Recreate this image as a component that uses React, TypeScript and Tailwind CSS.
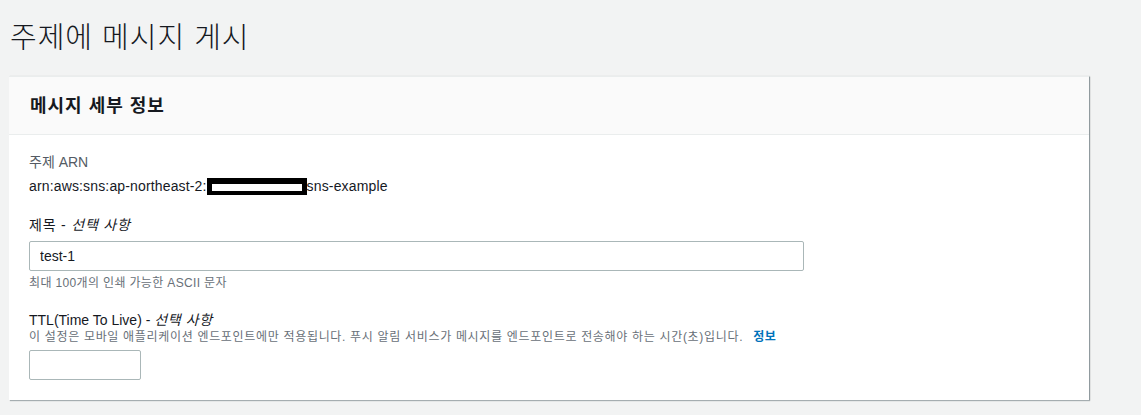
export default function App() {
  const font = { fontFamily: '"Liberation Sans", "Noto Sans CJK KR", sans-serif' }

  return (
    <div className="min-h-[415px] bg-[#f2f3f3] pt-[20px] pb-[14px] pr-[52px] pl-[9px] text-[#16191f]" style={font}>
      <h1 className="pl-px text-[29px] font-light leading-[36px] tracking-[1px] text-[#16191f]">주제에 메시지 게시</h1>

      <div className="mt-[20px] border-t border-[#eaeded] bg-white shadow-[1px_1px_1px_0_rgba(0,28,36,0.3),1px_0_1px_0_rgba(0,28,36,0.15)]">
        {/* header */}
        <div className="flex h-[58px] items-center border-b border-[#eaeded] bg-[#fafafa] px-[21px]">
          <h2 className="text-[18px] font-bold leading-[22px] tracking-[1px]">메시지 세부 정보</h2>
        </div>

        <div className="px-[20px] pt-[17px] pb-[20px]">
          {/* ARN */}
          <div>
            <p className="text-[14px] leading-[20px] text-[#545b64]">주제 ARN</p>
            <p className="mt-[4px] flex items-center text-[14px] leading-[20px] tracking-[0.15px]">
              arn:aws:sns:ap-northeast-2:
              <span className="inline-block h-[17px] w-[100px] border-x-[5px] border-t-[6px] border-b-[4px] border-black bg-white" />
              sns-example
            </p>
          </div>

          {/* subject */}
          <div className="mt-[19px]">
            <label className="block text-[14px] leading-[20px] tracking-[0.8px]">
              제목 - <i>선택 사항</i>
            </label>
            <input
              defaultValue="test-1"
              className="mt-[6px] block h-[30px] w-[775px] rounded-[2px] border border-[#aab7b8] px-[10px] text-[14px] text-[#16191f] outline-none"
            />
            <p className="mt-[4px] text-[12px] leading-[16px] tracking-[0.35px] text-[#687078]">최대 100개의 인쇄 가능한 ASCII 문자</p>
          </div>

          {/* TTL */}
          <div className="mt-[20px]">
            <label className="block text-[14px] leading-[18px]">
              TTL(Time To Live) - <i className="tracking-[0.6px]">선택 사항</i>
            </label>
            <p className="text-[12px] leading-[16px] tracking-[0.68px] text-[#687078]">
              이 설정은 모바일 애플리케이션 엔드포인트에만 적용됩니다. 푸시 알림 서비스가 메시지를 엔드포인트로 전송해야 하는 시간(초)입니다.
              <a className="ml-[10px] font-bold tracking-[0.5px] text-[#0073bb]">정보</a>
            </p>
            <input className="mt-[5px] block h-[30px] w-[112px] rounded-[2px] border border-[#aab7b8] px-[10px] text-[14px] outline-none" />
          </div>
        </div>
      </div>
    </div>
  )
}
